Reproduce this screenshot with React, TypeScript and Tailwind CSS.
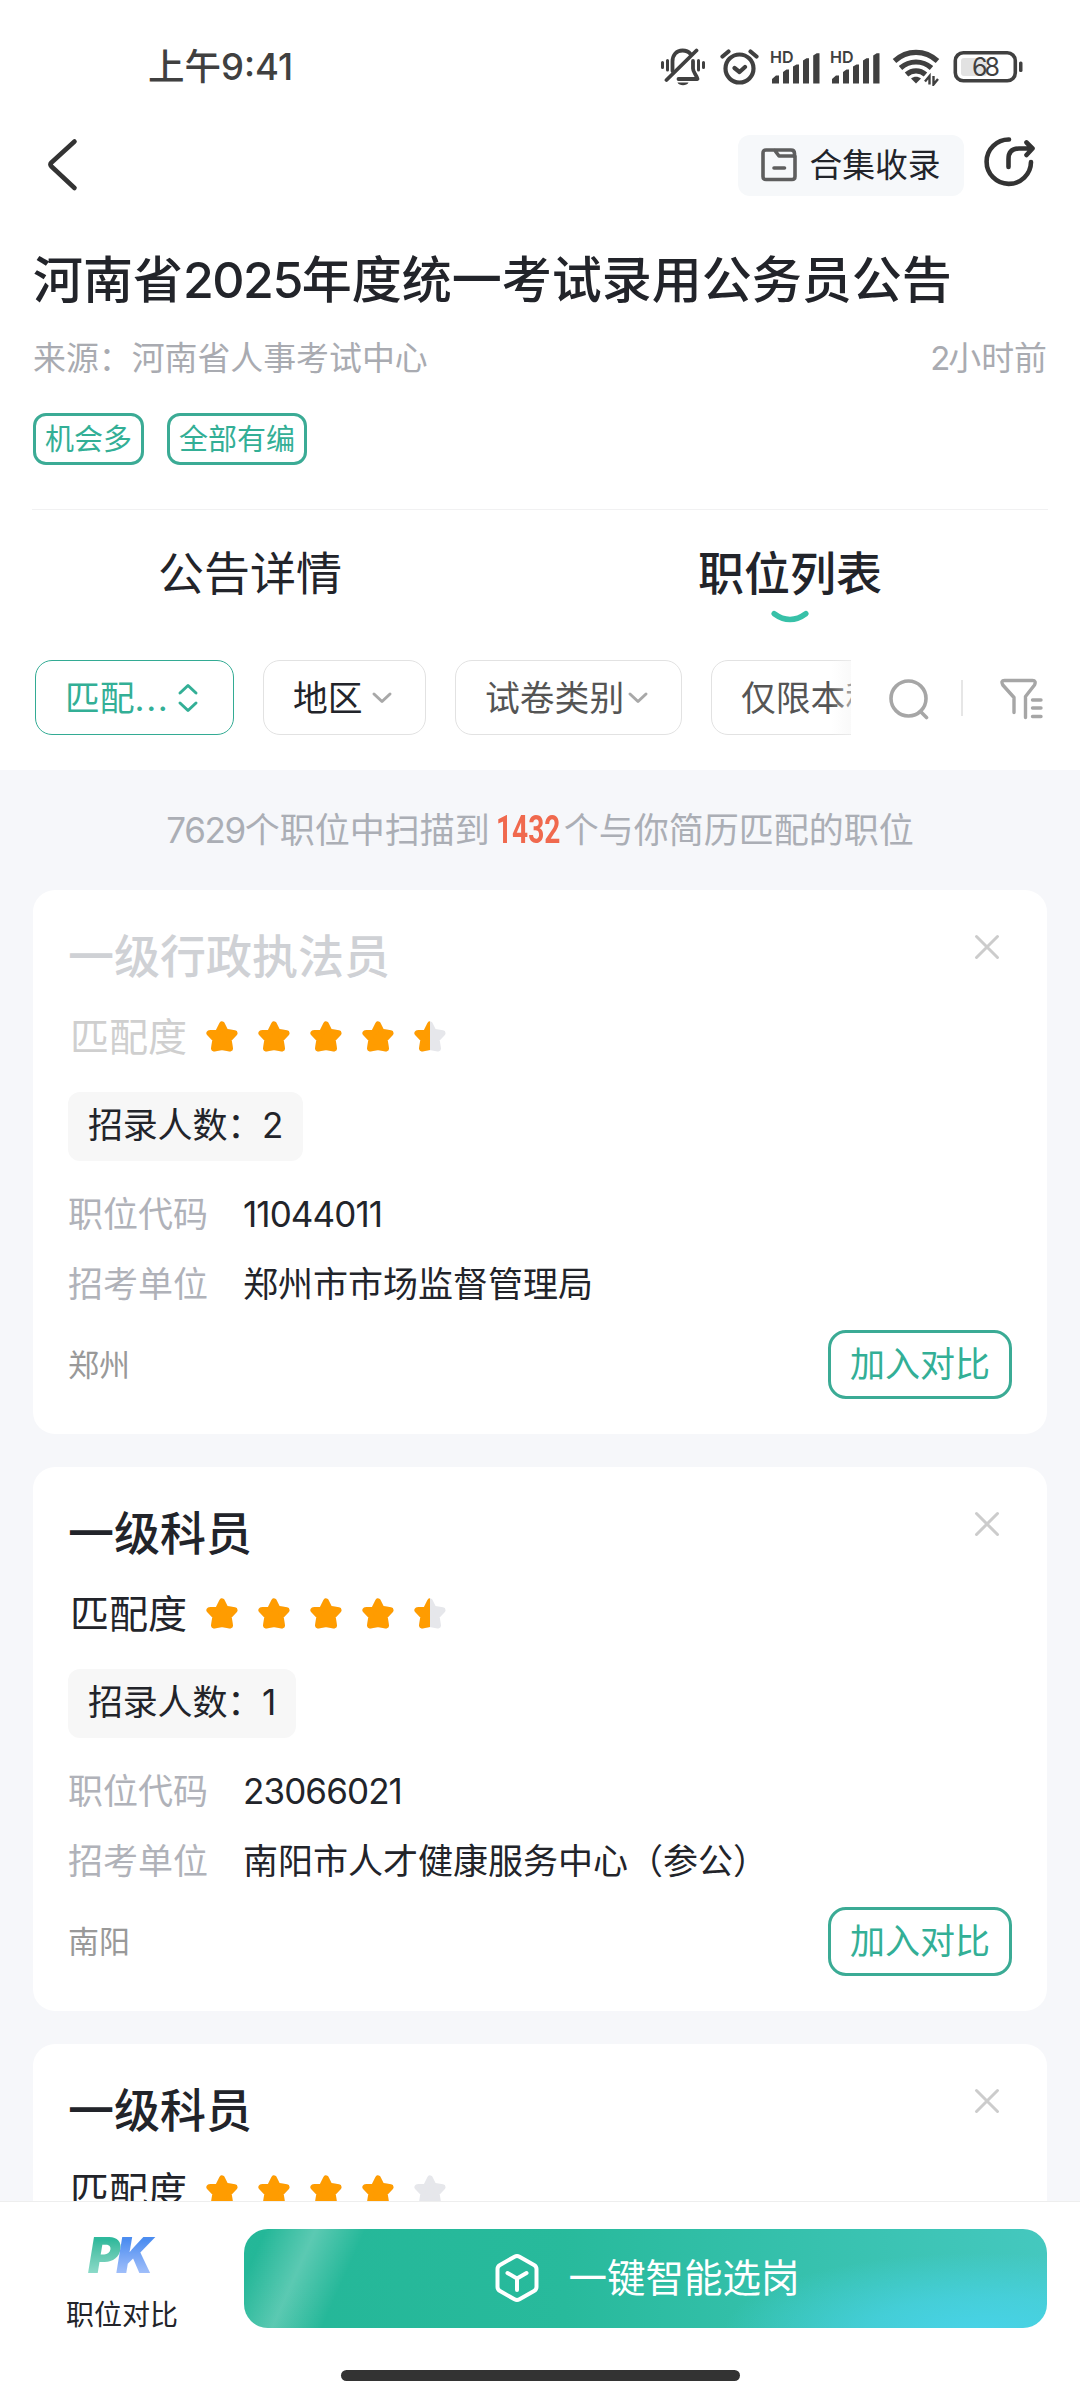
import { ReactNode, useState } from "react";

type Job = {
  id: number;
  title: string;
  score: number;
  count: number;
  code: string;
  unit: string;
  city: string;
  viewed?: boolean;
};

const jobs: Job[] = [
  {
    id: 1,
    title: "一级行政执法员",
    score: 4.5,
    count: 2,
    code: "11044011",
    unit: "郑州市市场监督管理局",
    city: "郑州",
    viewed: true,
  },
  {
    id: 2,
    title: "一级科员",
    score: 4.5,
    count: 1,
    code: "23066021",
    unit: "南阳市人才健康服务中心（参公）",
    city: "南阳",
  },
  {
    id: 3,
    title: "一级科员",
    score: 4,
    count: 1,
    code: "23066022",
    unit: "南阳市人才健康服务中心（参公）",
    city: "南阳",
  },
];

const STAR =
  "M16 3.500 L19.600 10.800 L28.500 12.200 L22.600 18.400 L24 27.500 L16 26 L8 27.500 L9.400 18.400 L3.500 12.200 L12.400 10.800 Z";

const Signal = () => (
  <svg width="50" height="36" viewBox="0 0 50 36" className="shrink-0">
    <text
      x="0"
      y="14"
      fontSize="16.500"
      fontWeight="600"
      fill="#404040"
      fontFamily="Inter, sans-serif"
      textLength="23.500"
      lengthAdjust="spacingAndGlyphs"
    >
      HD
    </text>
    <path
      fill="#404040"
      d="M2 34.500V30l4-3.500h3v8zM13 34.500V23l3.500-2.500h2.500v14zM23 34.500V17.500l3.500-2H29v19zM33 34.500V11.500l3.500-2.300H39v25.300zM43.200 34.500V6.500l3.500-2.300h2.800v30.300z"
    />
  </svg>
);

const StatusBar = () => (
  <div className="flex h-[133px] items-center pl-[148px] pr-[57px]">
    <div className="flex-1 text-[36.500px] font-medium leading-[40px] text-[#404040]">
      上午9:41
    </div>
    <div className="flex items-center">
      <svg width="46" height="38" viewBox="0 0 46 38" fill="none" stroke="#404040" strokeWidth="3.800" strokeLinecap="round">
        <path d="M2.500 14.500v5M7.500 12.500v9.500M38.500 12.500v9.500M43.500 14.500v5" strokeWidth="3" />
        <path d="M12.500 23V13.500c0-6.500 4-11 10-11 3.500 0 6 1 8 3.500" />
        <path d="M33 13v7.500c0 4 3.500 6 4.500 10.500H18.500" strokeLinejoin="round" />
        <path d="M36.500 2.500L6.500 32" />
        <path d="M17.500 34.500h11c-1.500 3.500-9.500 3.500-11 0z" fill="#404040" stroke="none" />
      </svg>
      <svg width="40" height="38" viewBox="0 0 40 38" fill="none" stroke="#404040" strokeWidth="4.200" strokeLinecap="round" strokeLinejoin="round" className="ml-3.5">
        <circle cx="19.500" cy="20.500" r="14" />
        <path d="M2.500 8.500L8.500 3.500M36.500 8.500L30.500 3.500M14.500 20l5 4L25 19" />
      </svg>
      <div className="ml-2.5 flex gap-2.5">
        <Signal />
        <Signal />
      </div>
      <svg width="48" height="38" viewBox="0 0 48 38" fill="none" stroke="#404040" strokeWidth="5.200" className="ml-3">
        <path d="M2.500 13C15 1.500 33 1.500 45.500 13M8.500 20c9-8 22-8 31 0M14.500 26.500c5.500-4.800 13.500-4.800 19 0" />
        <path d="M24 35.500l-5-5c3-2.500 7-2.500 10 0z" fill="#404040" stroke="none" />
        <path d="M37.500 36.500V28l-4.500 5.500M41.500 28v8.500l4.500-5.500" strokeWidth="2.400" />
      </svg>
      <svg width="70" height="32" viewBox="0 0 70 32" className="ml-[13px]">
        <rect x="2.300" y="1.800" width="60" height="28" rx="8" fill="none" stroke="#404040" strokeWidth="3.600" />
        <rect x="8" y="7" width="26" height="18" rx="3" fill="#e2e2e2" />
        <rect x="66" y="10.500" width="3.500" height="10.500" rx="1.500" fill="#404040" />
        <text x="33" y="24.800" fontSize="25" textAnchor="middle" textLength="28" fill="#404040" fontFamily="Inter, sans-serif">
          68
        </text>
      </svg>
    </div>
  </div>
);

const NavBar = () => (
  <div className="flex h-16 items-center pl-[46px] pr-[44px]">
    <svg width="34" height="56" viewBox="0 0 34 56" fill="none" stroke="#333333" strokeWidth="4.600" strokeLinecap="round" strokeLinejoin="round">
      <path d="M28.500 4.500L5.500 25.500q-2 2 0 4L28.500 51" />
    </svg>
    <button
      type="button"
      className="ml-auto flex h-[61px] w-[226px] items-center justify-center gap-3 rounded-[12px] bg-[#f6f8fa]"
    >
      <svg width="36" height="34" viewBox="0 0 36 34" fill="none" stroke="#5e5e5e" strokeWidth="3.600" strokeLinejoin="round" strokeLinecap="round">
        <path d="M2 5q0-3 3-3h8.500l4.500 6H34v20.500q0 3-3 3H5q-3 0-3-3zM14 2h16q3.500 0 3.500 3.500V9" />
        <path d="M13 20h10.500" />
      </svg>
      <span className="text-[32.800px] leading-[40px] text-[#22242a]">合集收录</span>
    </button>
    <svg width="56" height="56" viewBox="0 0 56 56" fill="none" stroke="#333333" strokeWidth="4.600" strokeLinecap="round" strokeLinejoin="round" className="ml-4">
      <path d="M29 2.500A22.200 22.200 0 1 0 51 25" />
      <path d="M28.500 30V22q0-10.500 10.500-10.500H52M46.500 5.500l6 6-6 6.500" />
    </svg>
  </div>
);

const Tag = ({ children }: { children: ReactNode }) => (
  <span className="flex h-[52px] items-center rounded-[13px] border-[3px] border-[#3bab95] px-[9px] text-[29px] leading-none text-[#33af96]">
    {children}
  </span>
);

const Chevron = ({ className }: { className: string }) => (
  <svg width="22" height="14" viewBox="0 0 22 14" fill="none" stroke="#a8a8a8" strokeWidth="3" strokeLinecap="round" strokeLinejoin="round" className={className}>
    <path d="M3 3l8 7.500L19 3" />
  </svg>
);

const Filters = () => (
  <div className="mt-[37px] flex h-[75px] items-center pl-[35px]">
    <div className="relative flex h-full w-[816px] gap-[29px] overflow-hidden text-[34.800px] leading-[40px]">
      <div className="flex h-full w-[199px] shrink-0 items-center rounded-[17px] border-[1.500px] border-[#33ab94] pl-[29px] text-[#33af96]">
        匹配<span className="tracking-[1.500px]">...</span>
        <svg width="22" height="32" viewBox="0 0 22 32" fill="none" stroke="currentColor" strokeWidth="3" strokeLinecap="round" strokeLinejoin="round" className="ml-2">
          <path d="M3 11l8-7.500L19 11M3 21l8 7.500L19 21" />
        </svg>
      </div>
      <div className="flex h-full w-[163px] shrink-0 items-center rounded-[17px] border border-[#e2e2e2] pl-[29px] text-[#22242a]">
        地区
        <Chevron className="ml-2" />
      </div>
      <div className="flex h-full w-[227px] shrink-0 items-center rounded-[17px] border border-[#e2e2e2] pl-[29px] text-[#555555]">
        试卷类别
        <Chevron className="ml-[3px]" />
      </div>
      <div className="flex h-full w-[227px] shrink-0 items-center whitespace-nowrap rounded-[17px] border border-[#e2e2e2] pl-[29px] text-[#555555]">
        仅限本科
      </div>
      <div className="absolute inset-y-0 right-0 w-5 bg-linear-to-r from-white/0 to-[#f4f4f4]/50" />
    </div>
    <svg width="44" height="44" viewBox="0 0 44 44" fill="none" stroke="#a6a6a6" strokeWidth="3.600" strokeLinecap="round" className="ml-9">
      <circle cx="21.500" cy="22.500" r="17.500" />
      <path d="M33.500 35.500l6 6" />
    </svg>
    <div className="ml-[30px] h-9 w-0.5 bg-[#e6e6e6]" />
    <svg width="44" height="44" viewBox="0 0 44 44" fill="none" stroke="#a6a6a6" strokeWidth="3.400" strokeLinecap="round" strokeLinejoin="round" className="ml-9">
      <path d="M15 36.500V21.500L3.800 9Q1.500 4.500 5.500 4.500h28q4 0 2 4.500L26.500 20.500v21M33.500 24h8.500M33.500 32h8.500M33.500 40.500h8.500" />
    </svg>
  </div>
);

const Star = ({ fill }: { fill: number }) => (
  <div className="relative h-8 w-8">
    <svg viewBox="0 0 32 32" className="h-8 w-8">
      <path d={STAR} fill="#e6e7eb" stroke="#e6e7eb" strokeWidth="6" strokeLinejoin="round" />
    </svg>
    <div className="absolute inset-y-0 left-0 overflow-hidden" style={{ width: `${fill * 100}%` }}>
      <svg viewBox="0 0 32 32" className="h-8 w-8 max-w-none">
        <path d={STAR} fill="#ff9c00" stroke="#ff9c00" strokeWidth="6" strokeLinejoin="round" />
      </svg>
    </div>
  </div>
);

const Row = ({ label, children }: { label: string; children: ReactNode }) => (
  <div className="flex h-[50px] items-center text-[35px] leading-[50px]">
    <span className="w-[175px] text-[#b0b2b9]">{label}</span>
    {children}
  </div>
);

const JobCard = ({ job }: { job: Job }) => (
  <div className="h-[544px] shrink-0 rounded-[22px] bg-white pl-[35px] pr-[35px] pt-9">
    <div className="flex h-[60px] justify-between">
      <h2
        className={`text-[46px] font-medium leading-[60px] ${
          job.viewed ? "text-[#cfd1d5]" : "text-[#22242a]"
        }`}
      >
        {job.title}
      </h2>
      <svg width="26" height="26" viewBox="0 0 26 26" stroke="#cccccc" strokeWidth="3" strokeLinecap="round" className="mr-3 mt-2">
        <path d="M2.500 2.500l21 21M23.500 2.500l-21 21" />
      </svg>
    </div>
    <div className="mt-[26px] flex h-[50px] items-center">
      <span
        className={`w-[138px] pl-0.5 text-[39px] leading-[50px] ${
          job.viewed ? "text-[#cfcfcf]" : "text-[#22242a]"
        }`}
      >
        匹配度
      </span>
      <div className="flex gap-5">
        {[0, 1, 2, 3, 4].map((i) => (
          <Star key={i} fill={Math.max(0, Math.min(1, job.score - i))} />
        ))}
      </div>
    </div>
    <div className="mt-[30px] flex">
      <span className="flex h-[69px] items-center rounded-[12px] bg-[#f7f7f7] px-5 pb-1 text-[35px] leading-[50px] tracking-[-0.200px] text-[#22242a]">
        招录人数：{job.count}
      </span>
    </div>
    <div className="mt-7 flex flex-col gap-5">
      <Row label="职位代码">
        <span className="tracking-[-0.900px] text-[#22242a]">{job.code}</span>
      </Row>
      <Row label="招考单位">
        <span className="text-[#22242a]">{job.unit}</span>
      </Row>
    </div>
    <div className="mt-[21px] flex h-[69px] items-center justify-between">
      <span className="text-[31px] leading-[40px] text-[#999999]">{job.city}</span>
      <button
        type="button"
        className="flex h-[69px] w-[184px] items-center justify-center rounded-[18px] border-[3px] border-[#3bab95] text-[35px] leading-none text-[#33af96]"
      >
        加入对比
      </button>
    </div>
  </div>
);

const BottomBar = () => (
  <div className="flex h-[199px] shrink-0 flex-col border-t border-[#eeeeee] bg-white">
    <div className="flex h-[126px] pl-[66px] pr-[33px] pt-[27px]">
      <div className="flex w-[178px] shrink-0 flex-col">
        <div className="flex h-[54px] pl-[22px] text-[49px] font-black italic leading-[54px]">
          <span className="bg-linear-to-b from-[#2fb99c] from-20% to-[#8fdccb] to-85% bg-clip-text pr-1 text-transparent">
            P
          </span>
          <span className="-ml-2 bg-linear-to-b from-[#4c8df0] from-20% to-[#a5c1fa] to-85% bg-clip-text pr-2 text-transparent">
            K
          </span>
        </div>
        <span className="mt-[14px] text-[28px] leading-[36px] text-[#22242a]">职位对比</span>
      </div>
      <button
        type="button"
        className="relative flex h-[99px] flex-1 items-center justify-center gap-[29px] overflow-hidden rounded-[24px] bg-[radial-gradient(ellipse_260px_80px_at_92%_105%,#48d3e8_0%,#48d3e8aa_45%,#48d3e800_100%),linear-gradient(90deg,#24b798_0%,#28ba9c_40%,#45c8bf_100%)] pb-0.5 pl-1"
      >
        <div className="absolute inset-y-0 left-0 w-[100px] -skew-x-[24deg] bg-linear-to-r from-white/0 via-white/25 to-white/0" />
        <svg width="44" height="50" viewBox="0 0 44 50" fill="none" stroke="#ffffff" strokeWidth="4" strokeLinecap="round" strokeLinejoin="round">
          <path d="M19.500 3.700q2.500-1.400 5 0L39 12q2.500 1.400 2.500 4v18q0 2.600-2.500 4l-14.500 8.300q-2.500 1.400-5 0L5 38q-2.500-1.400-2.500-4V16q0-2.600 2.500-4z" />
          <path d="M12.500 20l9.500 5.500 9.500-5.500M22 25.500V37" />
        </svg>
        <span className="text-[38.500px] leading-[50px] text-white">一键智能选岗</span>
      </button>
    </div>
    <div className="mx-auto mt-[42px] h-[11px] w-[399px] rounded-full bg-[#333333]" />
  </div>
);

export default function App() {
  const [tab, setTab] = useState(1);

  return (
    <div className="flex h-[2400px] w-[1080px] flex-col overflow-hidden bg-white font-['Inter','Noto_Sans_CJK_SC',sans-serif]">
      <StatusBar />
      <NavBar />
      <div className="mt-[53px] px-[33px]">
        <h1 className="whitespace-nowrap text-[50px] font-medium leading-[60px] text-[#22242a]">
          河南省<span className="tracking-[-1.500px]">2025</span>年度统一考试录用公务员公告
        </h1>
        <div className="mt-[28px] flex justify-between text-[32.900px] leading-[40px] text-[#a9abb1]">
          <span>来源：河南省人事考试中心</span>
          <span>
            <span className="tracking-[-2px]">2</span>小时前
          </span>
        </div>
        <div className="mt-[35px] flex gap-[23px]">
          <Tag>机会多</Tag>
          <Tag>全部有编</Tag>
        </div>
      </div>
      <div className="mx-8 mt-11 h-px shrink-0 bg-[#f1f1f2]" />
      <div className="-ml-5 flex w-[1080px]">
        {["公告详情", "职位列表"].map((name, i) => (
          <button
            key={name}
            type="button"
            onClick={() => setTab(i)}
            className="flex h-[113px] w-1/2 flex-col items-center pt-[33px]"
          >
            <span
              className={`text-[46px] leading-[60px] text-[#22242a] ${
                tab === i ? "font-medium" : "font-normal"
              }`}
            >
              {name}
            </span>
            {tab === i && (
              <svg width="42" height="14" viewBox="0 0 42 14" fill="none" stroke="#37c1a8" strokeWidth="6" strokeLinecap="round" className="mt-[7px]">
                <path d="M4 4q17 12.500 34 0" />
              </svg>
            )}
          </button>
        ))}
      </div>
      <Filters />
      <div className="mt-[35px] flex min-h-0 flex-1 flex-col overflow-hidden bg-[#f6f7fa] px-[33px] pt-10">
        <p className="flex h-10 shrink-0 items-center justify-center whitespace-nowrap text-[35px] leading-[40px] text-[#abaeb5]">
          <span className="tracking-[-1.400px]">7629</span>个职位中扫描到
          <span className="ml-1.5 mr-1 w-[64px]">
            <span className="inline-block origin-left scale-x-[0.72] font-['Roboto',sans-serif] text-[39px] font-bold text-[#f0694e]">
              1432
            </span>
          </span>
          个与你简历匹配的职位
        </p>
        <div className="mt-10 flex flex-col gap-[33px]">
          {jobs.map((job) => (
            <JobCard key={job.id} job={job} />
          ))}
        </div>
      </div>
      <BottomBar />
    </div>
  );
}
